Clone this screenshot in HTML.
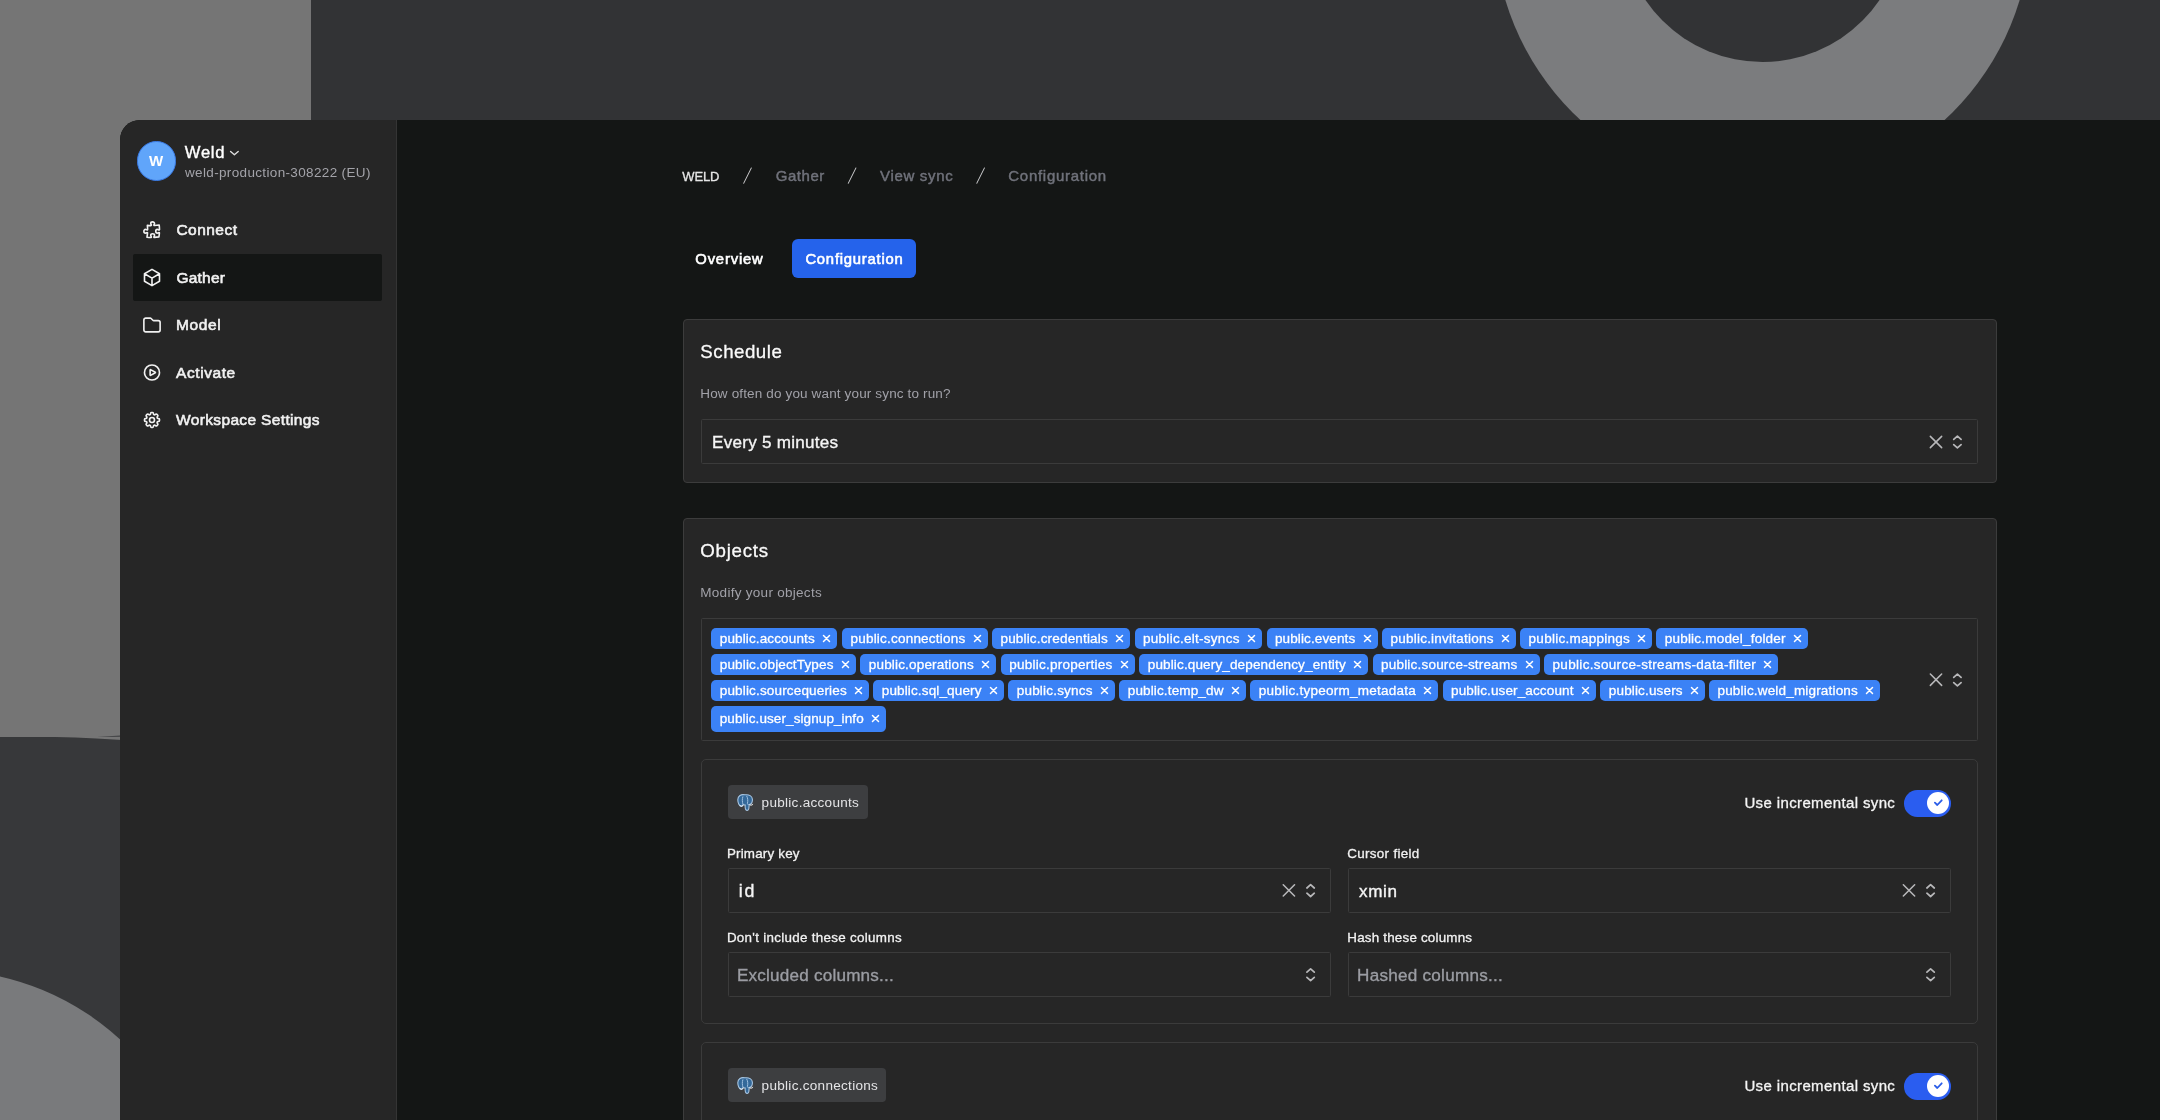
<!DOCTYPE html>
<html lang="en">
<head>
<meta charset="utf-8">
<title>Weld – Configuration</title>
<style>
*{box-sizing:border-box;margin:0;padding:0}
html,body{width:2160px;height:1120px;overflow:hidden}
body{position:relative;background:#323335;font-family:"Liberation Sans",sans-serif;color:#fff;-webkit-font-smoothing:antialiased}
.abs{position:absolute}
.t{position:absolute;white-space:nowrap;line-height:1}
svg{display:block}
/* background */
#bgL{left:0;top:0;width:311px;height:1120px;background:#757575}
#bgC{left:-321px;top:970px;width:526px;height:526px;border-radius:50%;background:#797a7c}
#ringO{left:1494.2px;top:-345.6px;width:536.4px;height:536.4px;border-radius:50%;background:#7b7c7e}
#ringI{left:1620.5px;top:-221.5px;width:283px;height:283px;border-radius:50%;background:#323335}
/* window */
#win{will-change:transform;left:120px;top:120px;width:2060px;height:1020px;background:#141615;border-top-left-radius:20px;overflow:hidden}
#side{left:0;top:0;width:276.6px;height:1020px;background:#262626;border-right:1.2px solid #343434}
.card{background:#262626;border:1px solid #3c3c3c;border-radius:4px}
.inp{border:1px solid #3b3b3b;border-radius:1.5px;background:#262626}
</style>
</head>
<body>
<div class="abs" id="bgL"></div>
<svg class="abs" style="left:0;top:0" width="140" height="1120" viewBox="0 0 140 1120"><path d="M0 737 L55 737 Q95 737.6 140 741.6 L140 1120 L0 1120 Z" fill="#37383a"/><path d="M97 736.9 L140 734.2 L140 736.6 Z" fill="#3d3e40"/></svg>
<div class="abs" id="bgC"></div>
<div class="abs" id="ringO"></div>
<div class="abs" id="ringI"></div>

<div class="abs" id="win">
<!--SIDEBAR-->
<div class="abs" id="side"><div class="abs" style="left:-120px;top:-120px;width:400px;height:1120px">
<div class="abs" style="left:136.8px;top:141.2px;width:39.4px;height:39.4px;border-radius:50%;background:#60a5fa;border:1px solid #3a7be6"></div>
<div class="t" style="left:149.10px;top:153.00px;font-size:15px;color:#ffffff;letter-spacing:0.000px;font-weight:700;">W</div>
<div class="t" style="left:184.80px;top:145.25px;font-size:16.6px;color:#ffffff;letter-spacing:0.727px;-webkit-text-stroke:0.4px #ffffff;">Weld</div>
<svg class="abs" style="left:229px;top:148px" width="11" height="11" viewBox="0 0 11 11"><g transform="translate(0.40 0.10)"><path d="M1.2 3.3 L5 6.7 L8.8 3.3" fill="none" stroke="#dcdcdc" stroke-width="1.4" stroke-linecap="round" stroke-linejoin="round"/></g></svg>
<div class="t" style="left:185.00px;top:166.47px;font-size:13.5px;color:#a3a3a9;letter-spacing:0.348px;">weld-production-308222 (EU)</div>
<svg class="abs" style="left:142px;top:220px" width="21" height="21" viewBox="0 0 21 21" fill="none" stroke="#f1f1f1" stroke-width="1.95" stroke-linecap="round" stroke-linejoin="round"><g transform="translate(0.00 0.00) scale(0.83333 0.83333)"><path d="M14.25 6.087c0-.355.186-.676.401-.959.221-.29.349-.634.349-1.003 0-1.036-1.007-1.875-2.25-1.875s-2.25.84-2.25 1.875c0 .369.128.713.349 1.003.215.283.401.604.401.959v0a.64.64 0 0 1-.657.643 48.39 48.39 0 0 1-4.163-.3c.186 1.613.293 3.25.315 4.907a.656.656 0 0 1-.658.663v0c-.355 0-.676-.186-.959-.401a1.647 1.647 0 0 0-1.003-.349c-1.036 0-1.875 1.007-1.875 2.25s.84 2.25 1.875 2.25c.369 0 .713-.128 1.003-.349.283-.215.604-.401.959-.401v0c.31 0 .555.26.532.57a48.039 48.039 0 0 1-.642 5.056c1.518.19 3.058.309 4.616.354a.64.64 0 0 0 .657-.643v0c0-.355-.186-.676-.401-.959a1.647 1.647 0 0 1-.349-1.003c0-1.035 1.008-1.875 2.25-1.875 1.243 0 2.25.84 2.25 1.875 0 .369-.128.713-.349 1.003-.215.283-.4.604-.4.959v0c0 .333.277.599.61.58a48.1 48.1 0 0 0 5.427-.63 48.05 48.05 0 0 0 .582-4.717.532.532 0 0 0-.533-.57v0c-.355 0-.676.186-.959.401-.29.221-.634.349-1.003.349-1.035 0-1.875-1.007-1.875-2.25s.84-2.25 1.875-2.25c.37 0 .713.128 1.003.349.283.215.604.4.959.4v0a.656.656 0 0 0 .658-.663 48.422 48.422 0 0 0-.37-5.36c-1.886.342-3.81.574-5.766.689a.578.578 0 0 1-.61-.58v0Z"/></g></svg>
<div class="t" style="left:176.40px;top:222.38px;font-size:15.5px;color:#f1f1f1;letter-spacing:0.478px;-webkit-text-stroke:0.6px #f1f1f1;">Connect</div>
<div class="abs" style="left:133px;top:254px;width:249px;height:47px;border-radius:2px;background:#141615"></div>
<svg class="abs" style="left:142px;top:267px" width="21" height="21" viewBox="0 0 21 21" fill="none" stroke="#f1f1f1" stroke-width="1.95" stroke-linecap="round" stroke-linejoin="round"><g transform="translate(0.00 0.50) scale(0.83333 0.83333)"><path d="m21 7.5-9-5.25L3 7.5m18 0-9 5.25m9-5.25v9l-9 5.25M3 7.5l9 5.25M3 7.5v9l9 5.25m0-9v9"/></g></svg>
<div class="t" style="left:176.40px;top:269.68px;font-size:15.5px;color:#f1f1f1;letter-spacing:0.223px;-webkit-text-stroke:0.6px #f1f1f1;">Gather</div>
<svg class="abs" style="left:142px;top:315px" width="21" height="21" viewBox="0 0 21 21" fill="none" stroke="#f1f1f1" stroke-width="1.95" stroke-linecap="round" stroke-linejoin="round"><g transform="translate(0.00 0.00) scale(0.83333 0.83333)"><path d="M2.25 12.75V6a2.25 2.25 0 0 1 2.25-2.25h5.379a1.5 1.5 0 0 1 1.06.44l2.122 2.12a1.5 1.5 0 0 0 1.06.44H19.5A2.25 2.25 0 0 1 21.75 9v9a2.25 2.25 0 0 1-2.25 2.25h-15A2.25 2.25 0 0 1 2.25 18v-5.25Z"/></g></svg>
<div class="t" style="left:176.00px;top:317.28px;font-size:15.5px;color:#f1f1f1;letter-spacing:0.596px;-webkit-text-stroke:0.6px #f1f1f1;">Model</div>
<svg class="abs" style="left:142px;top:362px" width="21" height="21" viewBox="0 0 21 21" fill="none" stroke="#f1f1f1" stroke-width="1.95" stroke-linecap="round" stroke-linejoin="round"><g transform="translate(0.00 0.50) scale(0.83333 0.83333)"><path d="M21 12a9 9 0 1 1-18 0 9 9 0 0 1 18 0Z"/><path d="M15.91 11.672a.375.375 0 0 1 0 .656l-5.603 3.113a.375.375 0 0 1-.557-.328V8.887c0-.286.307-.466.557-.327l5.603 3.112Z"/></g></svg>
<div class="t" style="left:176.10px;top:364.68px;font-size:15.5px;color:#f1f1f1;letter-spacing:0.566px;-webkit-text-stroke:0.6px #f1f1f1;">Activate</div>
<svg class="abs" style="left:142px;top:410px" width="21" height="21" viewBox="0 0 21 21" fill="none" stroke="#f1f1f1" stroke-width="1.95" stroke-linecap="round" stroke-linejoin="round"><g transform="translate(0.00 0.00) scale(0.83333 0.83333)"><path d="M10.343 3.94c.09-.542.56-.94 1.11-.94h1.093c.55 0 1.02.398 1.11.94l.149.894c.07.424.384.764.78.93.398.164.855.142 1.205-.108l.737-.527a1.125 1.125 0 0 1 1.45.12l.773.774c.39.389.44 1.002.12 1.45l-.527.737c-.25.35-.272.806-.107 1.204.165.397.505.71.93.78l.893.15c.543.09.94.559.94 1.109v1.094c0 .55-.397 1.02-.94 1.11l-.894.149c-.424.07-.764.383-.929.78-.165.398-.143.854.107 1.204l.527.738c.32.447.269 1.06-.12 1.45l-.774.773a1.125 1.125 0 0 1-1.449.12l-.738-.527c-.35-.25-.806-.272-1.203-.107-.398.165-.71.505-.781.929l-.149.894c-.09.542-.56.94-1.11.94h-1.094c-.55 0-1.019-.398-1.11-.94l-.148-.894c-.071-.424-.384-.764-.781-.93-.398-.164-.854-.142-1.204.108l-.738.527c-.447.32-1.06.269-1.45-.12l-.773-.774a1.125 1.125 0 0 1-.12-1.45l.527-.737c.25-.35.272-.806.108-1.204-.165-.397-.506-.71-.93-.78l-.894-.15c-.542-.09-.94-.56-.94-1.109v-1.094c0-.55.398-1.02.94-1.11l.894-.149c.424-.07.765-.383.93-.78.165-.398.143-.854-.108-1.204l-.526-.738a1.125 1.125 0 0 1 .12-1.45l.773-.773a1.125 1.125 0 0 1 1.45-.12l.737.527c.35.25.807.272 1.204.107.397-.165.71-.505.78-.929l.15-.894Z"/><path d="M15 12a3 3 0 1 1-6 0 3 3 0 0 1 6 0Z"/></g></svg>
<div class="t" style="left:176.10px;top:412.18px;font-size:15.5px;color:#f1f1f1;letter-spacing:0.344px;-webkit-text-stroke:0.6px #f1f1f1;">Workspace Settings</div>
</div></div>
<!--/SIDEBAR-->
<!--MAIN-->
<div class="abs" id="main" style="left:-120px;top:-120px;width:2160px;height:1120px">
<div class="t" style="left:682.30px;top:170.00px;font-size:13.0px;color:#e6e6e6;letter-spacing:-0.153px;-webkit-text-stroke:0.3px #e6e6e6;">WELD</div>
<div class="t" style="left:775.70px;top:168.40px;font-size:15px;color:#70727b;letter-spacing:0.549px;-webkit-text-stroke:0.45px #70727b;">Gather</div>
<div class="t" style="left:880.10px;top:168.40px;font-size:15px;color:#70727b;letter-spacing:0.669px;-webkit-text-stroke:0.45px #70727b;">View sync</div>
<div class="t" style="left:1008.30px;top:168.40px;font-size:15px;color:#70727b;letter-spacing:0.723px;-webkit-text-stroke:0.45px #70727b;">Configuration</div>
<svg class="abs" style="left:737px;top:165px" width="21" height="21" viewBox="0 0 21 21"><g transform="translate(0.50 0.60)"><path d="M5.555 17.776l8-16 .894.448-8 16-.894-.448z" fill="#c9c9cb"/></g></svg>
<svg class="abs" style="left:842px;top:165px" width="21" height="21" viewBox="0 0 21 21"><g transform="translate(0.10 0.60)"><path d="M5.555 17.776l8-16 .894.448-8 16-.894-.448z" fill="#c9c9cb"/></g></svg>
<svg class="abs" style="left:970px;top:165px" width="21" height="21" viewBox="0 0 21 21"><g transform="translate(0.60 0.60)"><path d="M5.555 17.776l8-16 .894.448-8 16-.894-.448z" fill="#c9c9cb"/></g></svg>
<div class="abs" style="left:792px;top:239px;width:124px;height:38.5px;border-radius:6px;background:#2563eb"></div>
<div class="t" style="left:695.30px;top:252.07px;font-size:14.8px;color:#ffffff;letter-spacing:0.832px;-webkit-text-stroke:0.6px #ffffff;">Overview</div>
<div class="t" style="left:805.40px;top:252.07px;font-size:14.8px;color:#ffffff;letter-spacing:0.780px;-webkit-text-stroke:0.6px #ffffff;">Configuration</div>
<div class="abs card" style="left:683px;top:319px;width:1314px;height:163.6px"></div>
<div class="t" style="left:700.30px;top:343.15px;font-size:18.72px;color:#fafafa;letter-spacing:0.505px;-webkit-text-stroke:0.3px #fafafa;">Schedule</div>
<div class="t" style="left:700.30px;top:386.56px;font-size:13.52px;color:#a1a1a8;letter-spacing:0.140px;">How often do you want your sync to run?</div>
<div class="abs inp" style="left:701px;top:419px;width:1277px;height:45.4px"></div>
<div class="t" style="left:712.10px;top:434.32px;font-size:17.1px;color:#f5f5f5;letter-spacing:0.243px;-webkit-text-stroke:0.35px #f5f5f5;">Every 5 minutes</div>
<div class="abs card" style="left:683px;top:518px;width:1314px;height:640px"></div>
<div class="t" style="left:700.30px;top:542.05px;font-size:18.72px;color:#fafafa;letter-spacing:0.739px;-webkit-text-stroke:0.3px #fafafa;">Objects</div>
<div class="t" style="left:700.30px;top:585.56px;font-size:13.52px;color:#a1a1a8;letter-spacing:0.274px;">Modify your objects</div>
<div class="abs inp" style="left:701px;top:618.4px;width:1277px;height:122.6px"></div>
<div class="abs" style="left:711.25px;top:628px;width:125.75px;height:21.3px;background:#3b82f6;border-radius:5px"></div>
<div class="t" style="left:719.75px;top:631.51px;font-size:13.52px;color:#ffffff;letter-spacing:0.125px;-webkit-text-stroke:0.3px #ffffff;">public.accounts</div>
<svg class="abs" style="left:821px;top:633px" width="11" height="11" viewBox="0 0 11 11"><g transform="translate(0.50 0.50)"><path d="M2.0 2.0 L8.0 8.0 M8.0 2.0 L2.0 8.0" stroke="#fff" stroke-width="1.5" stroke-linecap="round" fill="none"/></g></svg>
<div class="abs" style="left:842px;top:628px;width:145.50px;height:21.3px;background:#3b82f6;border-radius:5px"></div>
<div class="t" style="left:850.50px;top:631.51px;font-size:13.52px;color:#ffffff;letter-spacing:0.204px;-webkit-text-stroke:0.3px #ffffff;">public.connections</div>
<svg class="abs" style="left:972px;top:633px" width="11" height="11" viewBox="0 0 11 11"><g transform="translate(0.50 0.50)"><path d="M2.0 2.0 L8.0 8.0 M8.0 2.0 L2.0 8.0" stroke="#fff" stroke-width="1.5" stroke-linecap="round" fill="none"/></g></svg>
<div class="abs" style="left:992px;top:628px;width:138.00px;height:21.3px;background:#3b82f6;border-radius:5px"></div>
<div class="t" style="left:1000.50px;top:631.51px;font-size:13.52px;color:#ffffff;letter-spacing:0.161px;-webkit-text-stroke:0.3px #ffffff;">public.credentials</div>
<svg class="abs" style="left:1114px;top:633px" width="11" height="11" viewBox="0 0 11 11"><g transform="translate(0.50 0.50)"><path d="M2.0 2.0 L8.0 8.0 M8.0 2.0 L2.0 8.0" stroke="#fff" stroke-width="1.5" stroke-linecap="round" fill="none"/></g></svg>
<div class="abs" style="left:1134.5px;top:628px;width:127.25px;height:21.3px;background:#3b82f6;border-radius:5px"></div>
<div class="t" style="left:1143.00px;top:631.51px;font-size:13.52px;color:#ffffff;letter-spacing:0.269px;-webkit-text-stroke:0.3px #ffffff;">public.elt-syncs</div>
<svg class="abs" style="left:1246px;top:633px" width="11" height="11" viewBox="0 0 11 11"><g transform="translate(0.50 0.50)"><path d="M2.0 2.0 L8.0 8.0 M8.0 2.0 L2.0 8.0" stroke="#fff" stroke-width="1.5" stroke-linecap="round" fill="none"/></g></svg>
<div class="abs" style="left:1266.5px;top:628px;width:111.00px;height:21.3px;background:#3b82f6;border-radius:5px"></div>
<div class="t" style="left:1275.00px;top:631.51px;font-size:13.52px;color:#ffffff;letter-spacing:0.107px;-webkit-text-stroke:0.3px #ffffff;">public.events</div>
<svg class="abs" style="left:1362px;top:633px" width="11" height="11" viewBox="0 0 11 11"><g transform="translate(0.50 0.50)"><path d="M2.0 2.0 L8.0 8.0 M8.0 2.0 L2.0 8.0" stroke="#fff" stroke-width="1.5" stroke-linecap="round" fill="none"/></g></svg>
<div class="abs" style="left:1382px;top:628px;width:133.75px;height:21.3px;background:#3b82f6;border-radius:5px"></div>
<div class="t" style="left:1390.50px;top:631.51px;font-size:13.52px;color:#ffffff;letter-spacing:0.220px;-webkit-text-stroke:0.3px #ffffff;">public.invitations</div>
<svg class="abs" style="left:1500px;top:633px" width="11" height="11" viewBox="0 0 11 11"><g transform="translate(0.50 0.50)"><path d="M2.0 2.0 L8.0 8.0 M8.0 2.0 L2.0 8.0" stroke="#fff" stroke-width="1.5" stroke-linecap="round" fill="none"/></g></svg>
<div class="abs" style="left:1520.1px;top:628px;width:132.00px;height:21.3px;background:#3b82f6;border-radius:5px"></div>
<div class="t" style="left:1528.60px;top:631.51px;font-size:13.52px;color:#ffffff;letter-spacing:0.250px;-webkit-text-stroke:0.3px #ffffff;">public.mappings</div>
<svg class="abs" style="left:1636px;top:633px" width="11" height="11" viewBox="0 0 11 11"><g transform="translate(0.50 0.50)"><path d="M2.0 2.0 L8.0 8.0 M8.0 2.0 L2.0 8.0" stroke="#fff" stroke-width="1.5" stroke-linecap="round" fill="none"/></g></svg>
<div class="abs" style="left:1656.25px;top:628px;width:151.65px;height:21.3px;background:#3b82f6;border-radius:5px"></div>
<div class="t" style="left:1664.75px;top:631.51px;font-size:13.52px;color:#ffffff;letter-spacing:0.200px;-webkit-text-stroke:0.3px #ffffff;">public.model_folder</div>
<svg class="abs" style="left:1792px;top:633px" width="11" height="11" viewBox="0 0 11 11"><g transform="translate(0.50 0.50)"><path d="M2.0 2.0 L8.0 8.0 M8.0 2.0 L2.0 8.0" stroke="#fff" stroke-width="1.5" stroke-linecap="round" fill="none"/></g></svg>
<div class="abs" style="left:711.25px;top:654px;width:144.50px;height:21.3px;background:#3b82f6;border-radius:5px"></div>
<div class="t" style="left:719.75px;top:657.51px;font-size:13.52px;color:#ffffff;letter-spacing:0.145px;-webkit-text-stroke:0.3px #ffffff;">public.objectTypes</div>
<svg class="abs" style="left:840px;top:659px" width="11" height="11" viewBox="0 0 11 11"><g transform="translate(0.50 0.50)"><path d="M2.0 2.0 L8.0 8.0 M8.0 2.0 L2.0 8.0" stroke="#fff" stroke-width="1.5" stroke-linecap="round" fill="none"/></g></svg>
<div class="abs" style="left:860.25px;top:654px;width:135.75px;height:21.3px;background:#3b82f6;border-radius:5px"></div>
<div class="t" style="left:868.75px;top:657.51px;font-size:13.52px;color:#ffffff;letter-spacing:0.171px;-webkit-text-stroke:0.3px #ffffff;">public.operations</div>
<svg class="abs" style="left:980px;top:659px" width="11" height="11" viewBox="0 0 11 11"><g transform="translate(0.50 0.50)"><path d="M2.0 2.0 L8.0 8.0 M8.0 2.0 L2.0 8.0" stroke="#fff" stroke-width="1.5" stroke-linecap="round" fill="none"/></g></svg>
<div class="abs" style="left:1000.75px;top:654px;width:133.75px;height:21.3px;background:#3b82f6;border-radius:5px"></div>
<div class="t" style="left:1009.25px;top:657.51px;font-size:13.52px;color:#ffffff;letter-spacing:0.234px;-webkit-text-stroke:0.3px #ffffff;">public.properties</div>
<svg class="abs" style="left:1119px;top:659px" width="11" height="11" viewBox="0 0 11 11"><g transform="translate(0.50 0.50)"><path d="M2.0 2.0 L8.0 8.0 M8.0 2.0 L2.0 8.0" stroke="#fff" stroke-width="1.5" stroke-linecap="round" fill="none"/></g></svg>
<div class="abs" style="left:1139.25px;top:654px;width:228.75px;height:21.3px;background:#3b82f6;border-radius:5px"></div>
<div class="t" style="left:1147.75px;top:657.51px;font-size:13.52px;color:#ffffff;letter-spacing:0.139px;-webkit-text-stroke:0.3px #ffffff;">public.query_dependency_entity</div>
<svg class="abs" style="left:1352px;top:659px" width="11" height="11" viewBox="0 0 11 11"><g transform="translate(0.50 0.50)"><path d="M2.0 2.0 L8.0 8.0 M8.0 2.0 L2.0 8.0" stroke="#fff" stroke-width="1.5" stroke-linecap="round" fill="none"/></g></svg>
<div class="abs" style="left:1372.5px;top:654px;width:167.00px;height:21.3px;background:#3b82f6;border-radius:5px"></div>
<div class="t" style="left:1381.00px;top:657.51px;font-size:13.52px;color:#ffffff;letter-spacing:0.198px;-webkit-text-stroke:0.3px #ffffff;">public.source-streams</div>
<svg class="abs" style="left:1524px;top:659px" width="11" height="11" viewBox="0 0 11 11"><g transform="translate(0.50 0.50)"><path d="M2.0 2.0 L8.0 8.0 M8.0 2.0 L2.0 8.0" stroke="#fff" stroke-width="1.5" stroke-linecap="round" fill="none"/></g></svg>
<div class="abs" style="left:1544px;top:654px;width:234.20px;height:21.3px;background:#3b82f6;border-radius:5px"></div>
<div class="t" style="left:1552.50px;top:657.51px;font-size:13.52px;color:#ffffff;letter-spacing:0.322px;-webkit-text-stroke:0.3px #ffffff;">public.source-streams-data-filter</div>
<svg class="abs" style="left:1762px;top:659px" width="11" height="11" viewBox="0 0 11 11"><g transform="translate(0.50 0.50)"><path d="M2.0 2.0 L8.0 8.0 M8.0 2.0 L2.0 8.0" stroke="#fff" stroke-width="1.5" stroke-linecap="round" fill="none"/></g></svg>
<div class="abs" style="left:711.25px;top:680px;width:157.75px;height:21.3px;background:#3b82f6;border-radius:5px"></div>
<div class="t" style="left:719.75px;top:683.51px;font-size:13.52px;color:#ffffff;letter-spacing:0.155px;-webkit-text-stroke:0.3px #ffffff;">public.sourcequeries</div>
<svg class="abs" style="left:853px;top:685px" width="11" height="11" viewBox="0 0 11 11"><g transform="translate(0.50 0.50)"><path d="M2.0 2.0 L8.0 8.0 M8.0 2.0 L2.0 8.0" stroke="#fff" stroke-width="1.5" stroke-linecap="round" fill="none"/></g></svg>
<div class="abs" style="left:873.25px;top:680px;width:130.50px;height:21.3px;background:#3b82f6;border-radius:5px"></div>
<div class="t" style="left:881.75px;top:683.51px;font-size:13.52px;color:#ffffff;letter-spacing:0.133px;-webkit-text-stroke:0.3px #ffffff;">public.sql_query</div>
<svg class="abs" style="left:988px;top:685px" width="11" height="11" viewBox="0 0 11 11"><g transform="translate(0.50 0.50)"><path d="M2.0 2.0 L8.0 8.0 M8.0 2.0 L2.0 8.0" stroke="#fff" stroke-width="1.5" stroke-linecap="round" fill="none"/></g></svg>
<div class="abs" style="left:1008.25px;top:680px;width:106.50px;height:21.3px;background:#3b82f6;border-radius:5px"></div>
<div class="t" style="left:1016.75px;top:683.51px;font-size:13.52px;color:#ffffff;letter-spacing:0.187px;-webkit-text-stroke:0.3px #ffffff;">public.syncs</div>
<svg class="abs" style="left:1099px;top:685px" width="11" height="11" viewBox="0 0 11 11"><g transform="translate(0.50 0.50)"><path d="M2.0 2.0 L8.0 8.0 M8.0 2.0 L2.0 8.0" stroke="#fff" stroke-width="1.5" stroke-linecap="round" fill="none"/></g></svg>
<div class="abs" style="left:1119.25px;top:680px;width:126.50px;height:21.3px;background:#3b82f6;border-radius:5px"></div>
<div class="t" style="left:1127.75px;top:683.51px;font-size:13.52px;color:#ffffff;letter-spacing:0.135px;-webkit-text-stroke:0.3px #ffffff;">public.temp_dw</div>
<svg class="abs" style="left:1230px;top:685px" width="11" height="11" viewBox="0 0 11 11"><g transform="translate(0.50 0.50)"><path d="M2.0 2.0 L8.0 8.0 M8.0 2.0 L2.0 8.0" stroke="#fff" stroke-width="1.5" stroke-linecap="round" fill="none"/></g></svg>
<div class="abs" style="left:1250.25px;top:680px;width:187.75px;height:21.3px;background:#3b82f6;border-radius:5px"></div>
<div class="t" style="left:1258.75px;top:683.51px;font-size:13.52px;color:#ffffff;letter-spacing:0.234px;-webkit-text-stroke:0.3px #ffffff;">public.typeorm_metadata</div>
<svg class="abs" style="left:1422px;top:685px" width="11" height="11" viewBox="0 0 11 11"><g transform="translate(0.50 0.50)"><path d="M2.0 2.0 L8.0 8.0 M8.0 2.0 L2.0 8.0" stroke="#fff" stroke-width="1.5" stroke-linecap="round" fill="none"/></g></svg>
<div class="abs" style="left:1442.5px;top:680px;width:153.25px;height:21.3px;background:#3b82f6;border-radius:5px"></div>
<div class="t" style="left:1451.00px;top:683.51px;font-size:13.52px;color:#ffffff;letter-spacing:0.122px;-webkit-text-stroke:0.3px #ffffff;">public.user_account</div>
<svg class="abs" style="left:1580px;top:685px" width="11" height="11" viewBox="0 0 11 11"><g transform="translate(0.50 0.50)"><path d="M2.0 2.0 L8.0 8.0 M8.0 2.0 L2.0 8.0" stroke="#fff" stroke-width="1.5" stroke-linecap="round" fill="none"/></g></svg>
<div class="abs" style="left:1600.3px;top:680px;width:104.60px;height:21.3px;background:#3b82f6;border-radius:5px"></div>
<div class="t" style="left:1608.80px;top:683.51px;font-size:13.52px;color:#ffffff;letter-spacing:0.151px;-webkit-text-stroke:0.3px #ffffff;">public.users</div>
<svg class="abs" style="left:1689px;top:685px" width="11" height="11" viewBox="0 0 11 11"><g transform="translate(0.50 0.50)"><path d="M2.0 2.0 L8.0 8.0 M8.0 2.0 L2.0 8.0" stroke="#fff" stroke-width="1.5" stroke-linecap="round" fill="none"/></g></svg>
<div class="abs" style="left:1709px;top:680px;width:171.10px;height:21.3px;background:#3b82f6;border-radius:5px"></div>
<div class="t" style="left:1717.50px;top:683.51px;font-size:13.52px;color:#ffffff;letter-spacing:0.168px;-webkit-text-stroke:0.3px #ffffff;">public.weld_migrations</div>
<svg class="abs" style="left:1864px;top:685px" width="11" height="11" viewBox="0 0 11 11"><g transform="translate(0.50 0.50)"><path d="M2.0 2.0 L8.0 8.0 M8.0 2.0 L2.0 8.0" stroke="#fff" stroke-width="1.5" stroke-linecap="round" fill="none"/></g></svg>
<div class="abs" style="left:711.25px;top:706px;width:174.75px;height:25.5px;background:#3b82f6;border-radius:5px"></div>
<div class="t" style="left:719.75px;top:711.61px;font-size:13.52px;color:#ffffff;letter-spacing:0.086px;-webkit-text-stroke:0.3px #ffffff;">public.user_signup_info</div>
<svg class="abs" style="left:870px;top:713px" width="11" height="11" viewBox="0 0 11 11"><g transform="translate(0.50 0.50)"><path d="M2.0 2.0 L8.0 8.0 M8.0 2.0 L2.0 8.0" stroke="#fff" stroke-width="1.5" stroke-linecap="round" fill="none"/></g></svg>
<svg class="abs" style="left:1928px;top:434px" width="17" height="17" viewBox="0 0 17 17"><g transform="translate(0.00 0.00)"><path d="M2.35 2.35 L13.65 13.65 M13.65 2.35 L2.35 13.65" stroke="#b8b8ba" stroke-width="1.55" stroke-linecap="round" fill="none"/></g></svg>
<svg class="abs" style="left:1949px;top:432px" width="17" height="21" viewBox="0 0 17 21"><g transform="translate(0.40 0.00)"><path d="M4.3 7.4 L8 4.1 L11.7 7.4 M4.3 12.6 L8 15.9 L11.7 12.6" stroke="#b8b8ba" stroke-width="1.7" stroke-linecap="round" stroke-linejoin="round" fill="none"/></g></svg>
<svg class="abs" style="left:1928px;top:671px" width="17" height="17" viewBox="0 0 17 17"><g transform="translate(0.00 0.70)"><path d="M2.35 2.35 L13.65 13.65 M13.65 2.35 L2.35 13.65" stroke="#b8b8ba" stroke-width="1.55" stroke-linecap="round" fill="none"/></g></svg>
<svg class="abs" style="left:1949px;top:670px" width="17" height="21" viewBox="0 0 17 21"><g transform="translate(0.40 0.00)"><path d="M4.3 7.4 L8 4.1 L11.7 7.4 M4.3 12.6 L8 15.9 L11.7 12.6" stroke="#b8b8ba" stroke-width="1.7" stroke-linecap="round" stroke-linejoin="round" fill="none"/></g></svg>
<div class="abs card" style="left:701px;top:759px;width:1277px;height:264.5px;border-radius:5px;border-color:#3b3b3b"></div>
<div class="abs" style="left:728px;top:785.4px;width:139.5px;height:34px;border-radius:4px;background:#3d3e40"></div>
<svg class="abs" style="left:736px;top:793px" width="18" height="19" viewBox="0 0 18 19"><g transform="translate(0.60 0.60)"><path d="M8.2 1.2 C4.6 0.4 1.2 2 1.2 6.2 C1.2 9.6 2.8 12.6 4.6 12.8 C5.6 12.9 6.2 12 6.4 11.2 L8.6 11.4 C8.4 13.6 8.8 16.6 10.4 16.8 C12 17 12.4 15.2 12.4 13 L12.6 11 C14.6 10.4 16 8.2 15.8 5.6 C15.6 2.6 12.6 0.6 8.2 1.2 Z" fill="#34699a" stroke="#a9c6e2" stroke-width="1.1"/><path d="M6.2 3.2 C5.4 5.4 5.6 8.4 6.4 10.8 M10.2 2.6 C11.4 4.6 11.4 7.6 10.8 10 C10.6 10.8 11.6 11.2 12.6 11" fill="none" stroke="#9fc0e0" stroke-width="1" stroke-linecap="round"/><path d="M3.4 11.9 C4.6 12.9 5.8 12.7 6.5 11.5" fill="none" stroke="#f2f6fa" stroke-width="1" stroke-linecap="round"/><path d="M13.4 11.4 C14.4 11.8 15.4 11.6 16.2 10.8" fill="none" stroke="#ffffff" stroke-width="1" stroke-linecap="round"/></g></svg>
<div class="t" style="left:761.60px;top:795.76px;font-size:13.52px;color:#e4e4e6;letter-spacing:0.290px;">public.accounts</div>
<div class="t" style="left:1744.40px;top:795.20px;font-size:15px;color:#f5f5f5;letter-spacing:0.372px;-webkit-text-stroke:0.3px #f5f5f5;">Use incremental sync</div>
<div class="abs" style="left:1904px;top:790px;width:47px;height:26.5px;border-radius:13.25px;background:#2a5df0"></div>
<div class="abs" style="left:1927px;top:792px;width:22px;height:22px;border-radius:50%;background:#fff"></div>
<svg class="abs" style="left:1932px;top:797px" width="13" height="13" viewBox="0 0 13 13"><g transform="translate(0.00 0.00)"><path d="M2.9 5.7 L5.3 8.0 L9.7 3.3" stroke="#2b5de8" stroke-width="1.8" stroke-linecap="round" stroke-linejoin="round" fill="none"/></g></svg>
<div class="t" style="left:726.90px;top:847.06px;font-size:13.4px;color:#f2f2f2;letter-spacing:0.197px;-webkit-text-stroke:0.3px #f2f2f2;">Primary key</div>
<div class="t" style="left:1347.30px;top:847.06px;font-size:13.4px;color:#f2f2f2;letter-spacing:0.317px;-webkit-text-stroke:0.3px #f2f2f2;">Cursor field</div>
<div class="abs inp" style="left:728px;top:868px;width:603px;height:44.5px"></div>
<div class="abs inp" style="left:1348px;top:868px;width:603px;height:44.5px"></div>
<div class="t" style="left:738.65px;top:882.75px;font-size:17.78px;color:#f5f5f5;letter-spacing:1.861px;-webkit-text-stroke:0.35px #f5f5f5;">id</div>
<div class="t" style="left:1359.10px;top:882.62px;font-size:17.1px;color:#f5f5f5;letter-spacing:0.599px;-webkit-text-stroke:0.35px #f5f5f5;">xmin</div>
<svg class="abs" style="left:1280px;top:882px" width="17" height="17" viewBox="0 0 17 17"><g transform="translate(0.90 0.40)"><path d="M2.35 2.35 L13.65 13.65 M13.65 2.35 L2.35 13.65" stroke="#b8b8ba" stroke-width="1.55" stroke-linecap="round" fill="none"/></g></svg>
<svg class="abs" style="left:1302px;top:880px" width="17" height="21" viewBox="0 0 17 21"><g transform="translate(0.60 0.60)"><path d="M4.3 7.4 L8 4.1 L11.7 7.4 M4.3 12.6 L8 15.9 L11.7 12.6" stroke="#b8b8ba" stroke-width="1.7" stroke-linecap="round" stroke-linejoin="round" fill="none"/></g></svg>
<svg class="abs" style="left:1901px;top:882px" width="17" height="17" viewBox="0 0 17 17"><g transform="translate(0.00 0.40)"><path d="M2.35 2.35 L13.65 13.65 M13.65 2.35 L2.35 13.65" stroke="#b8b8ba" stroke-width="1.55" stroke-linecap="round" fill="none"/></g></svg>
<svg class="abs" style="left:1922px;top:880px" width="17" height="21" viewBox="0 0 17 21"><g transform="translate(0.60 0.60)"><path d="M4.3 7.4 L8 4.1 L11.7 7.4 M4.3 12.6 L8 15.9 L11.7 12.6" stroke="#b8b8ba" stroke-width="1.7" stroke-linecap="round" stroke-linejoin="round" fill="none"/></g></svg>
<div class="t" style="left:726.90px;top:931.26px;font-size:13.4px;color:#f2f2f2;letter-spacing:0.299px;-webkit-text-stroke:0.3px #f2f2f2;">Don't include these columns</div>
<div class="t" style="left:1347.30px;top:931.26px;font-size:13.4px;color:#f2f2f2;letter-spacing:0.200px;-webkit-text-stroke:0.3px #f2f2f2;">Hash these columns</div>
<div class="abs inp" style="left:728px;top:952.3px;width:603px;height:44.5px"></div>
<div class="abs inp" style="left:1348px;top:952.3px;width:603px;height:44.5px"></div>
<div class="t" style="left:736.90px;top:966.72px;font-size:17.1px;color:#9b9da3;letter-spacing:0.218px;-webkit-text-stroke:0.35px #9b9da3;">Excluded columns...</div>
<div class="t" style="left:1357.10px;top:966.72px;font-size:17.1px;color:#9b9da3;letter-spacing:0.255px;-webkit-text-stroke:0.35px #9b9da3;">Hashed columns...</div>
<svg class="abs" style="left:1302px;top:964px" width="17" height="21" viewBox="0 0 17 21"><g transform="translate(0.60 0.70)"><path d="M4.3 7.4 L8 4.1 L11.7 7.4 M4.3 12.6 L8 15.9 L11.7 12.6" stroke="#b8b8ba" stroke-width="1.7" stroke-linecap="round" stroke-linejoin="round" fill="none"/></g></svg>
<svg class="abs" style="left:1922px;top:964px" width="17" height="21" viewBox="0 0 17 21"><g transform="translate(0.60 0.70)"><path d="M4.3 7.4 L8 4.1 L11.7 7.4 M4.3 12.6 L8 15.9 L11.7 12.6" stroke="#b8b8ba" stroke-width="1.7" stroke-linecap="round" stroke-linejoin="round" fill="none"/></g></svg>
<div class="abs card" style="left:701px;top:1042px;width:1277px;height:264.5px;border-radius:5px;border-color:#3b3b3b"></div>
<div class="abs" style="left:728px;top:1068.4px;width:158px;height:34px;border-radius:4px;background:#3d3e40"></div>
<svg class="abs" style="left:736px;top:1076px" width="18" height="19" viewBox="0 0 18 19"><g transform="translate(0.60 0.60)"><path d="M8.2 1.2 C4.6 0.4 1.2 2 1.2 6.2 C1.2 9.6 2.8 12.6 4.6 12.8 C5.6 12.9 6.2 12 6.4 11.2 L8.6 11.4 C8.4 13.6 8.8 16.6 10.4 16.8 C12 17 12.4 15.2 12.4 13 L12.6 11 C14.6 10.4 16 8.2 15.8 5.6 C15.6 2.6 12.6 0.6 8.2 1.2 Z" fill="#34699a" stroke="#a9c6e2" stroke-width="1.1"/><path d="M6.2 3.2 C5.4 5.4 5.6 8.4 6.4 10.8 M10.2 2.6 C11.4 4.6 11.4 7.6 10.8 10 C10.6 10.8 11.6 11.2 12.6 11" fill="none" stroke="#9fc0e0" stroke-width="1" stroke-linecap="round"/><path d="M3.4 11.9 C4.6 12.9 5.8 12.7 6.5 11.5" fill="none" stroke="#f2f6fa" stroke-width="1" stroke-linecap="round"/><path d="M13.4 11.4 C14.4 11.8 15.4 11.6 16.2 10.8" fill="none" stroke="#ffffff" stroke-width="1" stroke-linecap="round"/></g></svg>
<div class="t" style="left:761.60px;top:1078.76px;font-size:13.52px;color:#e4e4e6;letter-spacing:0.298px;">public.connections</div>
<div class="t" style="left:1744.40px;top:1078.20px;font-size:15px;color:#f5f5f5;letter-spacing:0.372px;-webkit-text-stroke:0.3px #f5f5f5;">Use incremental sync</div>
<div class="abs" style="left:1904px;top:1073px;width:47px;height:26.5px;border-radius:13.25px;background:#2a5df0"></div>
<div class="abs" style="left:1927px;top:1075px;width:22px;height:22px;border-radius:50%;background:#fff"></div>
<svg class="abs" style="left:1932px;top:1080px" width="13" height="13" viewBox="0 0 13 13"><g transform="translate(0.00 0.00)"><path d="M2.9 5.7 L5.3 8.0 L9.7 3.3" stroke="#2b5de8" stroke-width="1.8" stroke-linecap="round" stroke-linejoin="round" fill="none"/></g></svg>
<div class="t" style="left:726.90px;top:1130.06px;font-size:13.4px;color:#f2f2f2;letter-spacing:0.197px;-webkit-text-stroke:0.3px #f2f2f2;">Primary key</div>
<div class="t" style="left:1347.30px;top:1130.06px;font-size:13.4px;color:#f2f2f2;letter-spacing:0.317px;-webkit-text-stroke:0.3px #f2f2f2;">Cursor field</div>
<div class="abs inp" style="left:728px;top:1151px;width:603px;height:44.5px"></div>
<div class="abs inp" style="left:1348px;top:1151px;width:603px;height:44.5px"></div>
<div class="t" style="left:738.65px;top:1165.75px;font-size:17.78px;color:#f5f5f5;letter-spacing:1.861px;-webkit-text-stroke:0.35px #f5f5f5;">id</div>
<div class="t" style="left:1359.10px;top:1165.62px;font-size:17.1px;color:#f5f5f5;letter-spacing:0.599px;-webkit-text-stroke:0.35px #f5f5f5;">xmin</div>
<svg class="abs" style="left:1280px;top:1165px" width="17" height="17" viewBox="0 0 17 17"><g transform="translate(0.90 0.40)"><path d="M2.35 2.35 L13.65 13.65 M13.65 2.35 L2.35 13.65" stroke="#b8b8ba" stroke-width="1.55" stroke-linecap="round" fill="none"/></g></svg>
<svg class="abs" style="left:1302px;top:1163px" width="17" height="21" viewBox="0 0 17 21"><g transform="translate(0.60 0.60)"><path d="M4.3 7.4 L8 4.1 L11.7 7.4 M4.3 12.6 L8 15.9 L11.7 12.6" stroke="#b8b8ba" stroke-width="1.7" stroke-linecap="round" stroke-linejoin="round" fill="none"/></g></svg>
<svg class="abs" style="left:1901px;top:1165px" width="17" height="17" viewBox="0 0 17 17"><g transform="translate(0.00 0.40)"><path d="M2.35 2.35 L13.65 13.65 M13.65 2.35 L2.35 13.65" stroke="#b8b8ba" stroke-width="1.55" stroke-linecap="round" fill="none"/></g></svg>
<svg class="abs" style="left:1922px;top:1163px" width="17" height="21" viewBox="0 0 17 21"><g transform="translate(0.60 0.60)"><path d="M4.3 7.4 L8 4.1 L11.7 7.4 M4.3 12.6 L8 15.9 L11.7 12.6" stroke="#b8b8ba" stroke-width="1.7" stroke-linecap="round" stroke-linejoin="round" fill="none"/></g></svg>
<div class="t" style="left:726.90px;top:1214.26px;font-size:13.4px;color:#f2f2f2;letter-spacing:0.299px;-webkit-text-stroke:0.3px #f2f2f2;">Don't include these columns</div>
<div class="t" style="left:1347.30px;top:1214.26px;font-size:13.4px;color:#f2f2f2;letter-spacing:0.200px;-webkit-text-stroke:0.3px #f2f2f2;">Hash these columns</div>
<div class="abs inp" style="left:728px;top:1235.3px;width:603px;height:44.5px"></div>
<div class="abs inp" style="left:1348px;top:1235.3px;width:603px;height:44.5px"></div>
<div class="t" style="left:736.90px;top:1249.72px;font-size:17.1px;color:#9b9da3;letter-spacing:0.218px;-webkit-text-stroke:0.35px #9b9da3;">Excluded columns...</div>
<div class="t" style="left:1357.10px;top:1249.72px;font-size:17.1px;color:#9b9da3;letter-spacing:0.255px;-webkit-text-stroke:0.35px #9b9da3;">Hashed columns...</div>
<svg class="abs" style="left:1302px;top:1247px" width="17" height="21" viewBox="0 0 17 21"><g transform="translate(0.60 0.70)"><path d="M4.3 7.4 L8 4.1 L11.7 7.4 M4.3 12.6 L8 15.9 L11.7 12.6" stroke="#b8b8ba" stroke-width="1.7" stroke-linecap="round" stroke-linejoin="round" fill="none"/></g></svg>
<svg class="abs" style="left:1922px;top:1247px" width="17" height="21" viewBox="0 0 17 21"><g transform="translate(0.60 0.70)"><path d="M4.3 7.4 L8 4.1 L11.7 7.4 M4.3 12.6 L8 15.9 L11.7 12.6" stroke="#b8b8ba" stroke-width="1.7" stroke-linecap="round" stroke-linejoin="round" fill="none"/></g></svg>
</div>
<!--/MAIN-->
</div>
</body>
</html>
